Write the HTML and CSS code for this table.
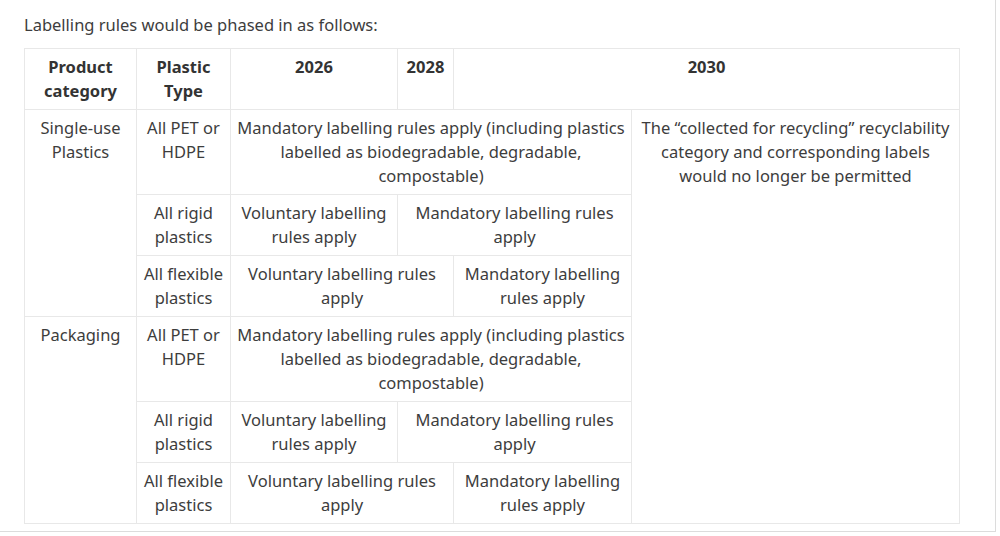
FILE: index.html
```html
<!DOCTYPE html>
<html lang="en">
<head>
<meta charset="utf-8">
<title>Labelling rules</title>
<link rel="stylesheet" href="styles.css">
</head>
<body>
<div class="panel">
  <p class="intro">Labelling rules would be phased in as follows:</p>
  <table class="rules">
    <colgroup>
      <col class="c-cat">
      <col class="c-type">
      <col class="c-2026">
      <col class="c-2028">
      <col class="c-2030a">
      <col class="c-2030b">
    </colgroup>
    <thead>
      <tr>
        <th>Product category</th>
        <th>Plastic Type</th>
        <th>2026</th>
        <th>2028</th>
        <th colspan="2">2030</th>
      </tr>
    </thead>
    <tbody>
      <tr>
        <td rowspan="3">Single-use Plastics</td>
        <td>All PET or HDPE</td>
        <td colspan="3">Mandatory labelling rules apply (including plastics labelled as biodegradable, degradable, compostable)</td>
        <td rowspan="6">The “collected for recycling” recyclability category and corresponding labels would no longer be permitted</td>
      </tr>
      <tr>
        <td>All rigid plastics</td>
        <td>Voluntary labelling rules apply</td>
        <td colspan="2">Mandatory labelling rules apply</td>
      </tr>
      <tr>
        <td>All flexible plastics</td>
        <td colspan="2">Voluntary labelling rules apply</td>
        <td>Mandatory labelling rules apply</td>
      </tr>
      <tr>
        <td rowspan="3">Packaging</td>
        <td>All PET or HDPE</td>
        <td colspan="3">Mandatory labelling rules apply (including plastics labelled as biodegradable, degradable, compostable)</td>
      </tr>
      <tr>
        <td>All rigid plastics</td>
        <td>Voluntary labelling rules apply</td>
        <td colspan="2">Mandatory labelling rules apply</td>
      </tr>
      <tr>
        <td>All flexible plastics</td>
        <td colspan="2">Voluntary labelling rules apply</td>
        <td>Mandatory labelling rules apply</td>
      </tr>
    </tbody>
  </table>
</div>
</body>
</html>
```

FILE: styles.css
```css
html, body {
  margin: 0;
  padding: 0;
  background: #ffffff;
}

body {
  font-family: "Noto Sans", "Open Sans", "DejaVu Sans", sans-serif;
  font-size: 16.5px;
  line-height: 24px;
  color: #3d3d3d;
}

.panel {
  width: 971px;
  padding: 13px 0 7px 24px;
  border-right: 1px solid #dcdcdc;
  border-bottom: 1px solid #dcdcdc;
}

.intro {
  margin: 0 0 11px 0;
}

.rules {
  width: 935px;
  table-layout: fixed;
  border-collapse: collapse;
  border: 1px solid #e8e8e8;
}

.c-cat { width: 112px; }
.c-type { width: 94px; }
.c-2026 { width: 167px; }
.c-2028 { width: 56px; }
.c-2030a { width: 178px; }
.c-2030b { width: 328px; }

.rules th,
.rules td {
  border: 1px solid #e8e8e8;
  padding: 6px 5px;
  text-align: center;
  vertical-align: top;
  font-size: 16.5px;
  line-height: 24px;
}

.rules th {
  font-weight: 700;
  color: #333333;
}
```
